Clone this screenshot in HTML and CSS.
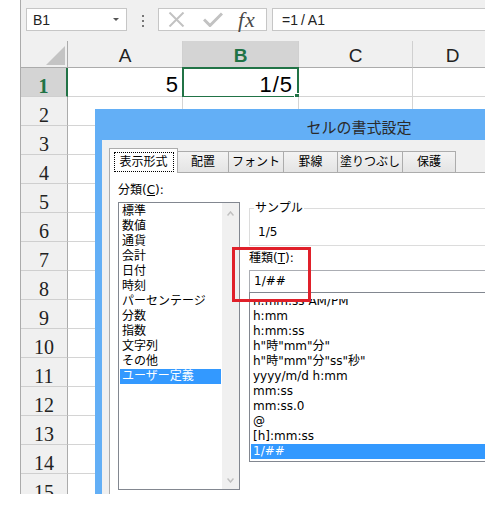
FILE: index.html
```html
<!DOCTYPE html>
<html lang="ja">
<head>
<meta charset="utf-8">
<title>セルの書式設定</title>
<link rel="stylesheet" href="styles.css">
</head>
<body>
<div class="app">
  <div class="toolbar">
    <div class="namebox"><span>B1</span><span class="nb-arrow"></span></div>
    <div class="grip"><i></i><i></i><i></i></div>
    <div class="fxbox">
      <svg class="ic-x" viewBox="0 0 17 15"><path d="M1.5 0.5 L15.5 14.5 M15.5 0.5 L1.5 14.5" stroke="#c2c2c2" stroke-width="2" fill="none"/></svg>
      <svg class="ic-ok" viewBox="0 0 20 15"><path d="M1 7.5 L7 13.5 L19 1.5" stroke="#c2c2c2" stroke-width="3" fill="none"/></svg>
      <span class="fx">fx</span>
    </div>
    <div class="formula">=1<span class="sl">/</span>A1</div>
  </div>
  <div class="sheet">
    <div class="row head">
      <div class="rh corner"><svg class="tri" viewBox="0 0 19 19"><path d="M19 0 L19 19 L0 19 Z" fill="#c4c4c4"/></svg></div>
      <div class="ch">A</div><div class="ch sel">B</div><div class="ch">C</div><div class="ch">D</div>
    </div>
    <div class="row"><div class="rh sel">1</div><div class="c num">5</div><div class="c num active">1<span class="sl2">/</span>5</div><div class="c"></div><div class="c"></div></div>
    <div class="row"><div class="rh">2</div><div class="c"></div><div class="c"></div><div class="c"></div><div class="c"></div></div>
    <div class="row"><div class="rh">3</div><div class="c"></div><div class="c"></div><div class="c"></div><div class="c"></div></div>
    <div class="row"><div class="rh">4</div><div class="c"></div><div class="c"></div><div class="c"></div><div class="c"></div></div>
    <div class="row"><div class="rh">5</div><div class="c"></div><div class="c"></div><div class="c"></div><div class="c"></div></div>
    <div class="row"><div class="rh">6</div><div class="c"></div><div class="c"></div><div class="c"></div><div class="c"></div></div>
    <div class="row"><div class="rh">7</div><div class="c"></div><div class="c"></div><div class="c"></div><div class="c"></div></div>
    <div class="row"><div class="rh">8</div><div class="c"></div><div class="c"></div><div class="c"></div><div class="c"></div></div>
    <div class="row"><div class="rh">9</div><div class="c"></div><div class="c"></div><div class="c"></div><div class="c"></div></div>
    <div class="row"><div class="rh">10</div><div class="c"></div><div class="c"></div><div class="c"></div><div class="c"></div></div>
    <div class="row"><div class="rh">11</div><div class="c"></div><div class="c"></div><div class="c"></div><div class="c"></div></div>
    <div class="row"><div class="rh">12</div><div class="c"></div><div class="c"></div><div class="c"></div><div class="c"></div></div>
    <div class="row"><div class="rh">13</div><div class="c"></div><div class="c"></div><div class="c"></div><div class="c"></div></div>
    <div class="row"><div class="rh">14</div><div class="c"></div><div class="c"></div><div class="c"></div><div class="c"></div></div>
    <div class="row"><div class="rh">15</div><div class="c"></div><div class="c"></div><div class="c"></div><div class="c"></div></div>
  </div>

  <div class="dialog">
    <div class="titlebar">セルの書式設定</div>
    <div class="dlg-body">
      <div class="tabs">
        <div class="tab active w1"><span class="focus">表示形式</span></div>
        <div class="tab w2">配置</div>
        <div class="tab w3">フォント</div>
        <div class="tab w4">罫線</div>
        <div class="tab w5">塗りつぶし</div>
        <div class="tab w6">保護</div>
      </div>
      <div class="panel">
        <div class="left">
          <div class="label">分類(<u>C</u>):</div>
          <div class="catlist">
            <div class="cat-items">
              <div class="it">標準</div>
              <div class="it">数値</div>
              <div class="it">通貨</div>
              <div class="it">会計</div>
              <div class="it">日付</div>
              <div class="it">時刻</div>
              <div class="it">パーセンテージ</div>
              <div class="it">分数</div>
              <div class="it">指数</div>
              <div class="it">文字列</div>
              <div class="it">その他</div>
              <div class="it on">ユーザー定義</div>
            </div>
            <div class="vscroll">
              <svg class="chev" viewBox="0 0 7 5"><path d="M0.5 4.5 L3.5 1 L6.5 4.5" stroke="#c0c0c0" stroke-width="1.5" fill="none"/></svg>
              <svg class="chev" viewBox="0 0 7 5"><path d="M0.5 0.5 L3.5 4 L6.5 0.5" stroke="#c0c0c0" stroke-width="1.5" fill="none"/></svg>
            </div>
          </div>
        </div>
        <div class="right">
          <fieldset class="sample">
            <legend>サンプル</legend>
            <div class="sample-val">1/5</div>
          </fieldset>
          <div class="label type-label">種類(<u>T</u>):</div>
          <div class="typebox">1/##</div>
          <div class="typelist">
            <div class="tl-clip">
              <div class="tl-items">
                <div class="it">h:mm:ss AM/PM</div>
                <div class="it">h:mm</div>
                <div class="it">h:mm:ss</div>
                <div class="it">h"時"mm"分"</div>
                <div class="it">h"時"mm"分"ss"秒"</div>
                <div class="it">yyyy/m/d h:mm</div>
                <div class="it">mm:ss</div>
                <div class="it">mm:ss.0</div>
                <div class="it">@</div>
                <div class="it">[h]:mm:ss</div>
                <div class="it on">1/##</div>
              </div>
            </div>
          </div>
        </div>
      </div>
    </div>
  </div>
  <div class="redbox"></div>
</div>
</body>
</html>
```

FILE: styles.css
```css
* { box-sizing: border-box; }
html, body { margin: 0; padding: 0; background: #fff; }
body {
  width: 485px;
  height: 505px;
  overflow: hidden;
  font-family: "Liberation Sans", Arial, sans-serif;
}
.app {
  margin-left: 20px;
  width: 465px;
  height: 494px;
  border-left: 1px solid #ababab;
  background: #f0f0f0;
  position: relative;
  overflow: hidden;
}

/* formula bar */
.toolbar {
  height: 41px;
  display: flex;
  align-items: flex-start;
  padding-top: 8px;
}
.toolbar > * { flex: none; }
.namebox {
  margin-left: 5px;
  width: 101px;
  height: 23px;
  background: #fff;
  border: 1px solid #c6c6c6;
  display: flex;
  align-items: center;
  justify-content: space-between;
  padding: 0 7px 0 6px;
  font-size: 14px;
  color: #222;
}
.nb-arrow {
  width: 0;
  height: 0;
  border-left: 3px solid transparent;
  border-right: 3px solid transparent;
  border-top: 3px solid #555;
}
.grip {
  width: 31px;
  height: 23px;
  display: flex;
  flex-direction: column;
  align-items: center;
  gap: 3px;
  padding-top: 7px;
}
.grip i { display: block; width: 2px; height: 2px; background: #777; }
.fxbox {
  width: 109px;
  height: 23px;
  background: #fff;
  border: 1px solid #c6c6c6;
  display: flex;
  align-items: center;
  padding-left: 9px;
}
.ic-x { width: 17px; height: 15px; margin-right: 18px; flex: none; }
.ic-ok { width: 20px; height: 15px; margin-right: 15px; flex: none; }
.fx {
  font-family: "Liberation Serif", serif;
  font-style: italic;
  font-size: 22px;
  line-height: 21px;
  color: #4a4a4a;
  letter-spacing: 1px;
}
.formula {
  margin-left: 5px;
  width: 260px;
  height: 23px;
  background: #fff;
  border: 1px solid #c6c6c6;
  border-right: none;
  padding-left: 9px;
  font-size: 14px;
  line-height: 22px;
  color: #222;
}
.sl { margin: 0 3px; }
.sl2 { margin: 0 1px; }

/* sheet */
.row {
  display: grid;
  grid-template-columns: 47px 115px 116px 114px 80px;
  height: 29px;
}
.row.head { height: 27px; }
.rh {
  background: #f0f0f0;
  border-right: 1px solid #ababab;
  border-bottom: 1px solid #cfcfcf;
  font-family: "Liberation Serif", serif;
  font-size: 20px;
  line-height: 20px;
  padding-top: 8px;
  text-align: center;
  color: #222;
}
.rh.sel {
  background: #d4d4d4;
  color: #217346;
  font-weight: bold;
  border-right: 2px solid #217346;
}
.rh.corner {
  padding: 0 2px 2px 0;
  display: flex;
  justify-content: flex-end;
  align-items: flex-end;
  border-bottom-color: #ababab;
}
.tri { width: 19px; height: 19px; }
.ch {
  background: #f0f0f0;
  border-right: 1px solid #d0d0d0;
  border-bottom: 1px solid #ababab;
  text-align: center;
  font-size: 19px;
  line-height: 19px;
  padding-top: 5px;
  color: #222;
}
.ch.sel { background: #d4d4d4; color: #217346; font-weight: bold; }
.c {
  background: #fff;
  border-right: 1px solid #d4d4d4;
  border-bottom: 1px solid #d4d4d4;
  position: relative;
}
.c.num {
  text-align: right;
  font-size: 22px;
  line-height: 22px;
  padding: 6px 4px 0 0;
  color: #000;
}
.c.active { padding-right: 6px; }
.c.active::before {
  content: "";
  position: absolute;
  left: -1px;
  top: -1px;
  right: -1px;
  bottom: -2px;
  border: 2px solid #217346;
}
.c.active::after {
  content: "";
  position: absolute;
  right: -2px;
  bottom: -3px;
  width: 5px;
  height: 5px;
  background: #217346;
  outline: 1px solid #fff;
}

/* dialog */
.dialog {
  position: absolute;
  left: 74px;
  top: 109px;
  width: 528px;
  height: 400px;
  background: #63aff6;
  z-index: 3;
}
.titlebar {
  height: 31px;
  padding-top: 2px;
  text-align: center;
  font-family: "Noto Sans CJK JP", sans-serif;
  font-size: 15px;
  line-height: 31px;
  color: #2a2a2a;
}
.dlg-body {
  margin-left: 7px;
  height: 369px;
  background: #f0f0f0;
  padding: 8px 0 0 7px;
  font-family: "DejaVu Sans", "Noto Sans CJK JP", sans-serif;
  font-size: 12px;
  color: #000;
}
.tabs {
  display: flex;
  align-items: flex-end;
  height: 24px;
  position: relative;
  z-index: 1;
}
.tab {
  flex: none;
  height: 21px;
  border: 1px solid #acacac;
  border-bottom: none;
  margin-right: -1px;
  background: linear-gradient(#f3f3f3, #e4e4e4);
  display: flex;
  align-items: center;
  justify-content: center;
  line-height: 15px;
  padding-top: 1px;
}
.tab.active {
  height: 25px;
  margin-bottom: -1px;
  background: #fff;
  align-items: flex-start;
  padding-top: 3px;
}
.focus {
  display: flex;
  align-items: center;
  justify-content: center;
  width: 60px;
  height: 20px;
  border: 1px dotted #000;
}
.w1 { width: 69px; }
.w2 { width: 52px; }
.w3 { width: 56px; }
.w4 { width: 55px; }
.w5 { width: 66px; }
.w6 { width: 54px; }
.panel {
  border: 1px solid #acacac;
  border-right: none;
  background: #fff;
  height: 400px;
  display: flex;
}
.label { line-height: 15px; }
.left { padding: 10px 0 0 8px; flex: none; }
.catlist {
  margin-top: 4px;
  width: 122px;
  height: 288px;
  border: 1px solid #828790;
  display: flex;
}
.cat-items { flex: 1; padding-top: 1px; }
.it { line-height: 15px; padding-left: 2px; margin: 0 1px; white-space: nowrap; }
.it.on { background: #3399ff; color: #fff; }
.vscroll {
  width: 17px;
  flex: none;
  background: #f0f0f0;
  display: flex;
  flex-direction: column;
  align-items: center;
  justify-content: space-between;
  padding: 8px 0 6px;
}
.chev { width: 7px; height: 5px; }

.right { padding: 28px 0 0 9px; width: 300px; flex: none; }
.sample {
  margin: 0;
  width: 280px;
  padding: 9px 0 5px 8px;
  border: 1px solid #dcdcdc;
  min-width: 0;
}
.sample legend {
  padding: 0 1px;
  margin-left: -4px;
  line-height: 15px;
}
.sample-val { line-height: 15px; }
.type-label { margin-top: 5px; }
.typebox {
  margin-top: 4px;
  width: 280px;
  height: 22px;
  border: 1px solid #abadb3;
  border-bottom: none;
  padding-left: 4px;
  line-height: 21px;
}
.typelist {
  width: 280px;
  height: 170px;
  border: 1px solid #828790;
  overflow: hidden;
}
.tl-clip { margin-top: 6px; height: 162px; overflow: hidden; }
.tl-items { margin-top: -5px; }

.redbox {
  position: absolute;
  left: 211px;
  top: 247px;
  width: 79px;
  height: 55px;
  border: 3px solid #e0202a;
  z-index: 5;
}
```
